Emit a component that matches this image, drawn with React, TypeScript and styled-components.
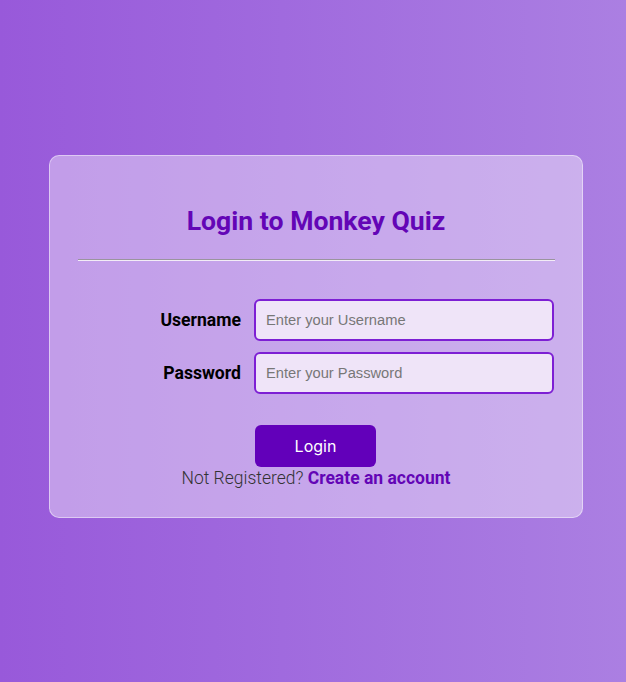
import styled, { createGlobalStyle } from "styled-components"

const GlobalStyle = createGlobalStyle`
  * {
    box-sizing: border-box;
  }
  body {
    margin: 0;
    font-family: Roboto, "Liberation Sans", sans-serif;
  }
`

const Page = styled.div`
  min-height: 682px;
  display: flex;
  justify-content: center;
  align-items: center;
  padding: 0 0 10px 6px;
  background: linear-gradient(90deg, #9859da 0%, #a06ade 45%, #ab7fe2 100%);
`

const Card = styled.div`
  width: 534px;
  padding: 32px 28px 28px;
  border-radius: 10px;
  border: 1px solid rgba(255, 255, 255, 0.45);
  background: rgba(255, 255, 255, 0.4);
  display: flex;
  flex-direction: column;
`

const Title = styled.h1`
  margin: 0;
  padding: 18px 0 23px;
  text-align: center;
  font-size: 26.6px;
  line-height: 30px;
  font-weight: 700;
  color: #6305b6;
`

const Divider = styled.hr`
  margin: 0 -1px 0 0;
  height: 0;
  border: none;
  border-top: 1px solid #9a949e;
  border-bottom: 1px solid #f2ecf6;
`

const Form = styled.form`
  margin-top: 38px;
  display: grid;
  grid-template-columns: 1fr 300px;
  column-gap: 13px;
  row-gap: 11px;
  align-items: center;
`

const Label = styled.label`
  justify-self: end;
  font-size: 17.6px;
  font-weight: 700;
  color: #000;
`

const Input = styled.input`
  width: 300px;
  height: 42px;
  padding: 0 10px;
  border: 2px solid #7d1fd4;
  border-radius: 6px;
  background: #efe4f8;
  font-family: "Liberation Sans", Arial, sans-serif;
  font-size: 14.7px;
  outline: none;
  &::placeholder {
    color: #777;
  }
`

const Button = styled.button`
  grid-column: 2;
  justify-self: start;
  margin: 20px 0 0 1px;
  width: 121px;
  height: 42px;
  border: none;
  border-radius: 6px;
  background: #6200ba;
  color: #fff;
  font-family: Inter, "Open Sans", sans-serif;
  font-size: 16px;
`

const Footer = styled.p`
  margin: 0;
  text-align: center;
  font-size: 17.5px;
  line-height: 22px;
  font-weight: 300;
  color: #333;
`

const Link = styled.a`
  font-weight: 700;
  color: #6305b6;
  text-decoration: none;
`

function App() {
  return (
    <Page>
      <GlobalStyle />
      <Card>
        <Title>Login to Monkey Quiz</Title>
        <Divider />
        <Form onSubmit={(e) => e.preventDefault()}>
          <Label htmlFor="username">Username</Label>
          <Input id="username" placeholder="Enter your Username" />
          <Label htmlFor="password">Password</Label>
          <Input id="password" type="password" placeholder="Enter your Password" />
          <Button type="submit">Login</Button>
        </Form>
        <Footer>
          Not Registered? <Link href="#">Create an account</Link>
        </Footer>
      </Card>
    </Page>
  )
}

export default App
